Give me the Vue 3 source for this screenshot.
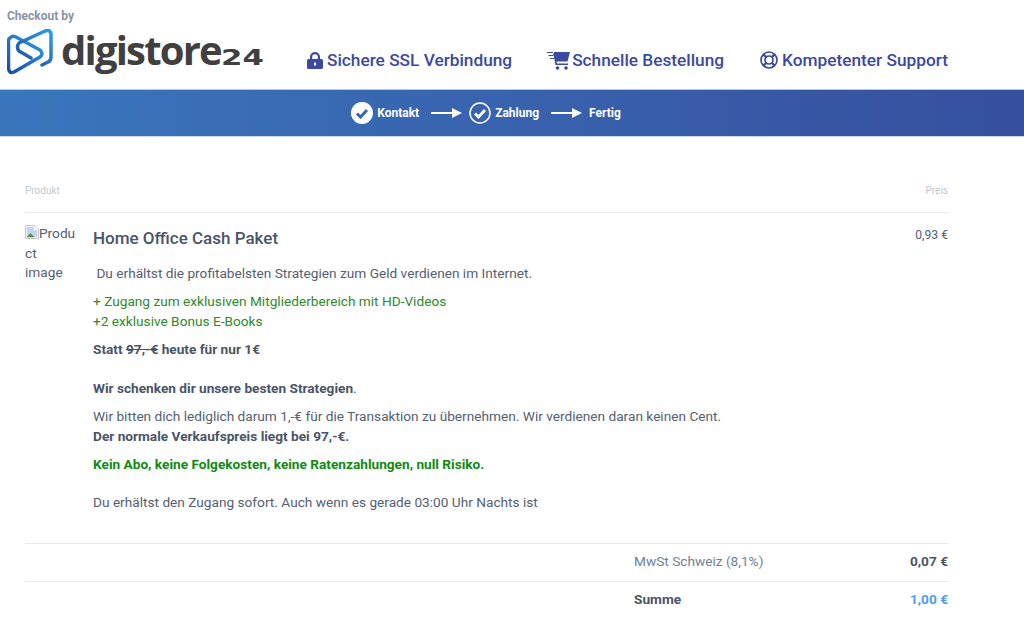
<template>
  <div class="page">
    <header class="top">
      <div class="brand">
        <div class="by">Checkout by</div>
        <div class="logo">
          <svg class="logo-mark" viewBox="0 0 46 46" width="46" height="46">
            <defs>
              <linearGradient id="lg" x1="0.1" y1="1" x2="0.9" y2="0">
                <stop offset="0" stop-color="#1f4fa8" />
                <stop offset="1" stop-color="#2a9be0" />
              </linearGradient>
            </defs>
            <path d="M3 9Q1 10 1.500 14V39Q2 45 7 43L33 28Q37 25 33 21L9 8Q5 6 3 9Z" fill="none" stroke="url(#lg)" stroke-width="3.500" stroke-linejoin="round" />
            <path d="M12 14L38 2Q44 0 44 6V28Q44 32 41 33L35 36M12 14Q9 18 12 22L24 29" fill="none" stroke="url(#lg)" stroke-width="3.500" stroke-linejoin="round" stroke-linecap="round" />
          </svg>
          <span class="logo-text">digistore<span class="logo-num">24</span></span>
        </div>
      </div>
      <nav class="usps">
        <div class="usp">
          <svg viewBox="0 0 16 17" width="16" height="17">
            <path fill="#3b4a9e" fill-rule="evenodd" d="M3 7V5a5 5 0 0 1 10 0v2h1.500A1.500 1.500 0 0 1 16 8.500v7a1.500 1.500 0 0 1-1.500 1.500h-13A1.500 1.500 0 0 1 0 15.500v-7A1.500 1.500 0 0 1 1.500 7zM5.200 7h5.600V5a2.800 2.800 0 0 0-5.600 0zM7 10.500v3h2v-3z" />
          </svg>
          <span>Sichere SSL Verbindung</span>
        </div>
        <div class="usp">
          <svg class="cart-icon" viewBox="0 0 23 19" width="23" height="19">
            <path fill="#3b4a9e" d="M6 2.500h1V1h16l-2.500 9.500H9.500l.4 2H21V14H8.500L6.500 3.500H6z" />
            <path d="M0 1.500h6M1.500 4.500h5M3 7.500h4" stroke="#3b4a9e" stroke-width="1.200" />
            <circle cx="10.500" cy="17" r="1.800" fill="#3b4a9e" />
            <circle cx="19" cy="17" r="1.800" fill="#3b4a9e" />
          </svg>
          <span>Schnelle Bestellung</span>
        </div>
        <div class="usp">
          <svg class="ring-icon" viewBox="0 0 18 18" width="18" height="18" fill="none" stroke="#3b4a9e">
            <circle cx="9" cy="9" r="8" stroke-width="1.700" />
            <circle cx="9" cy="9" r="4" stroke-width="1.700" />
            <path d="M3.500 3.500l3 3M14.500 3.500l-3 3M3.500 14.500l3-3M14.500 14.500l-3-3" stroke-width="2.400" />
          </svg>
          <span>Kompetenter Support</span>
        </div>
      </nav>
    </header>

    <div class="steps">
      <svg class="chk" viewBox="0 0 22 22" width="22" height="22">
        <circle cx="11" cy="11" r="11" fill="#fff" />
        <path d="M6 11.500l3.500 3.500 6.500-7" fill="none" stroke="#3768b3" stroke-width="3" />
      </svg>
      <span class="step">Kontakt</span>
      <svg class="arrow" viewBox="0 0 31 10" width="31" height="10"><path d="M0 5h24" stroke="#fff" stroke-width="2" /><path d="M21 0l10 5-10 5z" fill="#fff" /></svg>
      <svg class="chk" viewBox="0 0 22 22" width="22" height="22">
        <circle cx="11" cy="11" r="10" fill="none" stroke="#fff" stroke-width="1.500" />
        <path d="M6 11.500l3.500 3.500 6.500-7" fill="none" stroke="#fff" stroke-width="2.800" />
      </svg>
      <span class="step">Zahlung</span>
      <svg class="arrow" viewBox="0 0 31 10" width="31" height="10"><path d="M0 5h24" stroke="#fff" stroke-width="2" /><path d="M21 0l10 5-10 5z" fill="#fff" /></svg>
      <span class="step">Fertig</span>
    </div>

    <main class="cart">
      <div class="cart-head">
        <span>Produkt</span>
        <span>Preis</span>
      </div>
      <div class="item">
        <div class="thumb">
          <svg class="broken" viewBox="0 0 16 16" width="14" height="14">
            <path d="M.5.500h10l5 5v10H.5z" fill="#fff" stroke="#b9bcc0" />
            <path d="M2 2h8v4h4v8H2z" fill="#c3d4f2" />
            <path d="M2 14l4-5 3 3 2 2z" fill="#4f9a3e" />
          </svg>Produ<br />ct<br />image
        </div>
        <div class="info">
          <h2>Home Office Cash Paket</h2>
          <p class="lead">&nbsp;Du erhältst die profitabelsten Strategien zum Geld verdienen im Internet.</p>
          <p class="green">+ Zugang zum exklusiven Mitgliederbereich mit HD-Videos<br />+2 exklusive Bonus E-Books</p>
          <p class="statt"><b>Statt <s>97,-€</s> heute für nur 1€</b></p>
          <p class="gift"><b>Wir schenken dir unsere besten Strategien</b>.</p>
          <p class="ask">Wir bitten dich lediglich darum 1,-€ für die Transaktion zu übernehmen. Wir verdienen daran keinen Cent.<br /><b>Der normale Verkaufspreis liegt bei 97,-€.</b></p>
          <p class="noabo"><b>Kein Abo, keine Folgekosten, keine Ratenzahlungen, null Risiko.</b></p>
          <p class="now">Du erhältst den Zugang sofort. Auch wenn es gerade 03:00 Uhr Nachts ist</p>
        </div>
        <div class="price">0,93 €</div>
      </div>
      <div class="sum-row">
        <span class="sum-label">MwSt Schweiz (8,1%)</span>
        <b class="sum-val">0,07 €</b>
      </div>
      <div class="sum-row">
        <b class="sum-label">Summe</b>
        <b class="sum-val total">1,00 €</b>
      </div>
    </main>
  </div>
</template>

<script setup>
</script>

<style>
html, body {
  background: #fff;
}
</style>

<style scoped>
.page {
  width: 1024px;
  height: 633px;
  overflow: hidden;
  font-family: Roboto, "Liberation Sans", sans-serif;
  color: #556070;
  font-size: 13.66px;
}

.top {
  height: 89px;
  display: flex;
  box-sizing: border-box;
  padding-left: 7px;
}

.brand {
  width: 300px;
  flex: none;
  padding-top: 9px;
}

.by {
  font-size: 12px;
  line-height: 14px;
  font-weight: 700;
  color: #8a94a6;
}

.logo {
  display: flex;
  align-items: center;
  gap: 8px;
  margin-top: 4px;
}

.logo-mark {
  margin-top: -4px;
}

.logo-text {
  font-family: "Open Sans", sans-serif;
  font-weight: 700;
  font-size: 40px;
  line-height: 46px;
  letter-spacing: -1.8px;
  color: #404040;
}

.logo-num {
  display: inline-block;
  font-family: "DejaVu Sans", sans-serif;
  font-size: 22px;
  font-weight: 700;
  letter-spacing: 0;
  transform: scaleX(1.4);
  transform-origin: left;
}

.usps {
  display: flex;
  align-items: center;
  gap: 35px;
  align-self: flex-end;
  padding-bottom: 19px;
}

.usp {
  display: flex;
  align-items: center;
  gap: 4px;
  font-size: 17.25px;
  line-height: 20px;
  font-weight: 500;
  color: #3b4a9e;
}

.cart-icon {
  margin-right: -2px;
}

.ring-icon {
  margin-left: 1px;
}

.steps {
  height: 46px;
  display: flex;
  align-items: center;
  justify-content: center;
  padding-right: 52px;
  background: linear-gradient(90deg, #3a76bd 0%, #364f9f 100%);
  border-top: 1px solid #b9c6dd;
  border-bottom: 1px solid #c9d6ea;
}

.chk {
  margin-right: 4px;
}

.step {
  font-size: 12px;
  font-weight: 700;
  color: #fff;
}

.arrow {
  margin: 0 7px 0 12px;
}

.cart {
  margin: 0 76px 0 25px;
  padding-top: 48px;
}

.cart-head {
  display: flex;
  justify-content: space-between;
  font-size: 10px;
  line-height: 12px;
  color: #c3c8cf;
  padding-bottom: 15px;
  border-bottom: 1px solid #e8e8e8;
}

.item {
  display: flex;
  padding-top: 13px;
  height: 331px;
  box-sizing: border-box;
  border-bottom: 1px solid #e8e8e8;
}

.thumb {
  width: 50px;
  margin: -2px 18px 0 0;
  line-height: 19.5px;
  white-space: nowrap;
  flex: none;
}

.broken {
  vertical-align: -1px;
}

.info {
  flex: 1;
}

.info h2 {
  margin: 0 0 13px;
  font-size: 17px;
  line-height: 24px;
  font-weight: 500;
  color: #4a5568;
}

.info p {
  margin: 0;
  line-height: 20px;
}

.info b {
  color: #4a5568;
}

.info .green {
  color: #2f8a2a;
  margin-top: 8px;
}

.info .statt {
  margin-top: 8px;
}

.info .gift {
  margin-top: 19px;
}

.info .ask {
  margin-top: 8px;
}

.info .noabo {
  margin-top: 8px;
}

.info .noabo b {
  color: #108a10;
}

.info .now {
  margin-top: 18px;
}

.price {
  font-size: 12.2px;
  line-height: 20px;
  margin-top: -1px;
  flex: none;
}

.sum-row {
  display: flex;
  justify-content: space-between;
  align-items: center;
  height: 33px;
  padding: 0 0 4px 609px;
  border-bottom: 1px solid #e8e8e8;
}

.sum-row:last-child {
  border-bottom: none;
}

.sum-label {
  color: #718096;
  font-weight: 400;
}

b.sum-label {
  color: #4a5568;
  font-weight: 700;
}

.sum-val {
  color: #4a5568;
}

.total {
  color: #4a9bf5;
}
</style>
